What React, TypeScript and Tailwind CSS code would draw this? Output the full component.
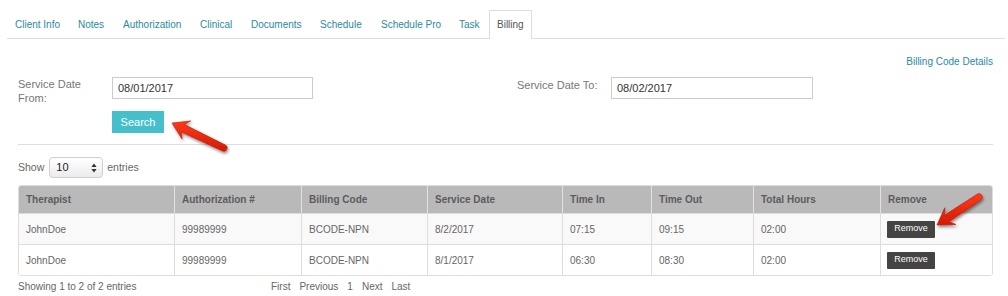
import React from "react";

const tabs = [
  { label: "Client Info", w: "w-[63px]" },
  { label: "Notes", w: "w-[45px]" },
  { label: "Authorization", w: "w-[77px]" },
  { label: "Clinical", w: "w-[51px]" },
  { label: "Documents", w: "w-[69px]" },
  { label: "Schedule", w: "w-[61px]" },
  { label: "Schedule Pro", w: "w-[78px]" },
  { label: "Task", w: "w-[38px]" },
  { label: "Billing", w: "w-[43px]", active: true },
];

const headers = [
  "Therapist",
  "Authorization #",
  "Billing Code",
  "Service Date",
  "Time In",
  "Time Out",
  "Total Hours",
  "Remove",
];

const rows = [
  ["JohnDoe", "99989999", "BCODE-NPN", "8/2/2017", "07:15", "09:15", "02:00"],
  ["JohnDoe", "99989999", "BCODE-NPN", "8/1/2017", "06:30", "08:30", "02:00"],
];

const gridCols =
  "grid grid-cols-[155px_127px_126px_135px_89px_102px_127px_1fr]";

function arrowPath(tail: [number, number], tip: [number, number]) {
  const dx = tip[0] - tail[0];
  const dy = tip[1] - tail[1];
  const len = Math.hypot(dx, dy);
  const ux = dx / len;
  const uy = dy / len;
  const nx = -uy;
  const ny = ux;
  const p = (a: number, b: number, along: number, side: number) =>
    `${(a + ux * along + nx * side).toFixed(2)} ${(b + uy * along + ny * side).toFixed(2)}`;
  const [tx, ty] = tail;
  const [hx, hy] = tip;
  return [
    `M ${p(tx, ty, 0, 3.3)}`,
    `L ${p(hx, hy, -12, 4)}`,
    `L ${p(hx, hy, -16, 10)}`,
    `L ${p(hx, hy, 0, 0)}`,
    `L ${p(hx, hy, -16, -10)}`,
    `L ${p(hx, hy, -12, -4)}`,
    `L ${p(tx, ty, 0, -3.3)}`,
    `A 3.3 3.3 0 0 0 ${p(tx, ty, 0, 3.3)}`,
    "Z",
  ].join(" ");
}

function Arrows() {
  return (
    <svg
      className="absolute left-0 top-0 pointer-events-none"
      width={1008}
      height={296}
      viewBox="0 0 1008 296"
    >
      <defs>
        <linearGradient id="ag" x1="0" y1="0" x2="0" y2="1">
          <stop offset="0" stopColor="#ff3a1a" />
          <stop offset="1" stopColor="#d41a04" />
        </linearGradient>
        <filter id="ash" x="-30%" y="-30%" width="160%" height="160%">
          <feDropShadow dx="1" dy="2" stdDeviation="1.4" floodColor="#000" floodOpacity="0.45" />
        </filter>
      </defs>
      <path
        d={arrowPath([224, 148], [172, 123])}
        fill="url(#ag)"
        stroke="#b81505"
        strokeWidth="0.6"
        filter="url(#ash)"
      />
      <path
        d={arrowPath([979, 197], [937, 225])}
        fill="url(#ag)"
        stroke="#b81505"
        strokeWidth="0.6"
        filter="url(#ash)"
      />
    </svg>
  );
}

export default function App() {
  return (
    <div className="relative w-[1008px] h-[296px] bg-white overflow-hidden font-['Liberation_Sans',Arial,sans-serif] text-[#555]">
      {/* Tabs */}
      <div className="pt-[10px] ml-[7px] mr-[3px]">
        <ul className="flex items-end border-b border-[#dddddd]">
          {tabs.map((t) => (
            <li
              key={t.label}
              className={`${t.w} h-[28px] flex items-center pl-[7px] text-[10px] border border-b-0 ${
                t.active
                  ? "border-[#dddddd] bg-white text-[#555] -mb-px h-[29px] pb-px"
                  : "border-transparent text-[#2a8aa0]"
              }`}
            >
              {t.label}
            </li>
          ))}
        </ul>
      </div>

      <div className="pl-[18px] pr-[15px]">
        {/* Billing code details */}
        <div className="h-[38px] flex justify-end pt-[16px]">
          <span className="text-[10px] leading-[14px] text-[#2a8aa0]">Billing Code Details</span>
        </div>

        {/* Form */}
        <div className="flex">
          <div className="w-[499px]">
            <div className="flex h-[22px] items-start">
              <div className="w-[94px] text-[11px] leading-[14px] text-[#777]">
                Service Date
                <br />
                From:
              </div>
              <div className="w-[201px] h-[22px] border border-[#cccccc] flex items-center pl-[5px] text-[11px] text-[#333]">
                08/01/2017
              </div>
            </div>
            <div className="ml-[94px] mt-[12px] w-[52px] h-[22px] bg-[#45c0cb] text-white text-[11px] flex items-center justify-center">
              Search
            </div>
          </div>
          <div className="flex h-[22px] items-start">
            <div className="w-[94px] text-[11px] leading-[14px] text-[#777] pt-px">Service Date To:</div>
            <div className="w-[202px] h-[22px] border border-[#cccccc] flex items-center pl-[5px] text-[11px] text-[#333]">
              08/02/2017
            </div>
          </div>
        </div>

        {/* HR */}
        <div className="mt-[11px] border-t border-[#dddddd]" />

        {/* Show entries */}
        <div className="mt-[12px] flex items-center text-[10.5px] text-[#666]">
          <span>Show</span>
          <div className="ml-[5px] mr-[4px] w-[54px] h-[21px] rounded-[4px] border border-[#cfcfcf] bg-gradient-to-b from-white to-[#ececec] flex items-center justify-between pl-[6px] pr-[5px] text-[11px] text-[#222]">
            <span>10</span>
            <svg width="6" height="10" viewBox="0 0 6 10">
              <path d="M3 0.5 L5.6 4 L0.4 4 Z" fill="#333" />
              <path d="M3 9.5 L5.6 6 L0.4 6 Z" fill="#333" />
            </svg>
          </div>
          <span>entries</span>
        </div>

        {/* Table */}
        <div className="mt-[7px] border border-[#dddddd] rounded-[3px] overflow-hidden">
          <div className={`${gridCols} h-[27px] bg-[#b9b9b9] text-[10px] font-bold text-[#5c5c5c]`}>
            {headers.map((h, i) => (
              <div
                key={h}
                className={`flex items-center pl-[7px] ${i > 0 ? "border-l border-[#e2e2e2]" : ""}`}
              >
                {h}
              </div>
            ))}
          </div>
          {rows.map((r, ri) => (
            <div
              key={ri}
              className={`${gridCols} h-[31px] border-t border-[#dddddd] text-[10px] text-[#666] ${
                ri === 0 ? "bg-[#f9f9f9]" : "bg-white"
              }`}
            >
              {r.map((c, i) => (
                <div
                  key={i}
                  className={`flex items-center pl-[7px] ${i > 0 ? "border-l border-[#dddddd]" : ""}`}
                >
                  {c}
                </div>
              ))}
              <div className="flex items-center pl-[6px] border-l border-[#dddddd]">
                <div className="w-[48px] h-[17px] bg-[#444444] rounded-[1px] text-white text-[9px] flex items-center justify-center">
                  Remove
                </div>
              </div>
            </div>
          ))}
        </div>

        {/* Footer */}
        <div className="mt-[4px] flex text-[10px] leading-[13px] text-[#666]">
          <div className="w-[253px]">Showing 1 to 2 of 2 entries</div>
          <div className="flex">
            <span>First</span>
            <span className="ml-[9px]">Previous</span>
            <span className="ml-[9px]">1</span>
            <span className="ml-[9px]">Next</span>
            <span className="ml-[9px]">Last</span>
          </div>
        </div>
      </div>

      <Arrows />
    </div>
  );
}
